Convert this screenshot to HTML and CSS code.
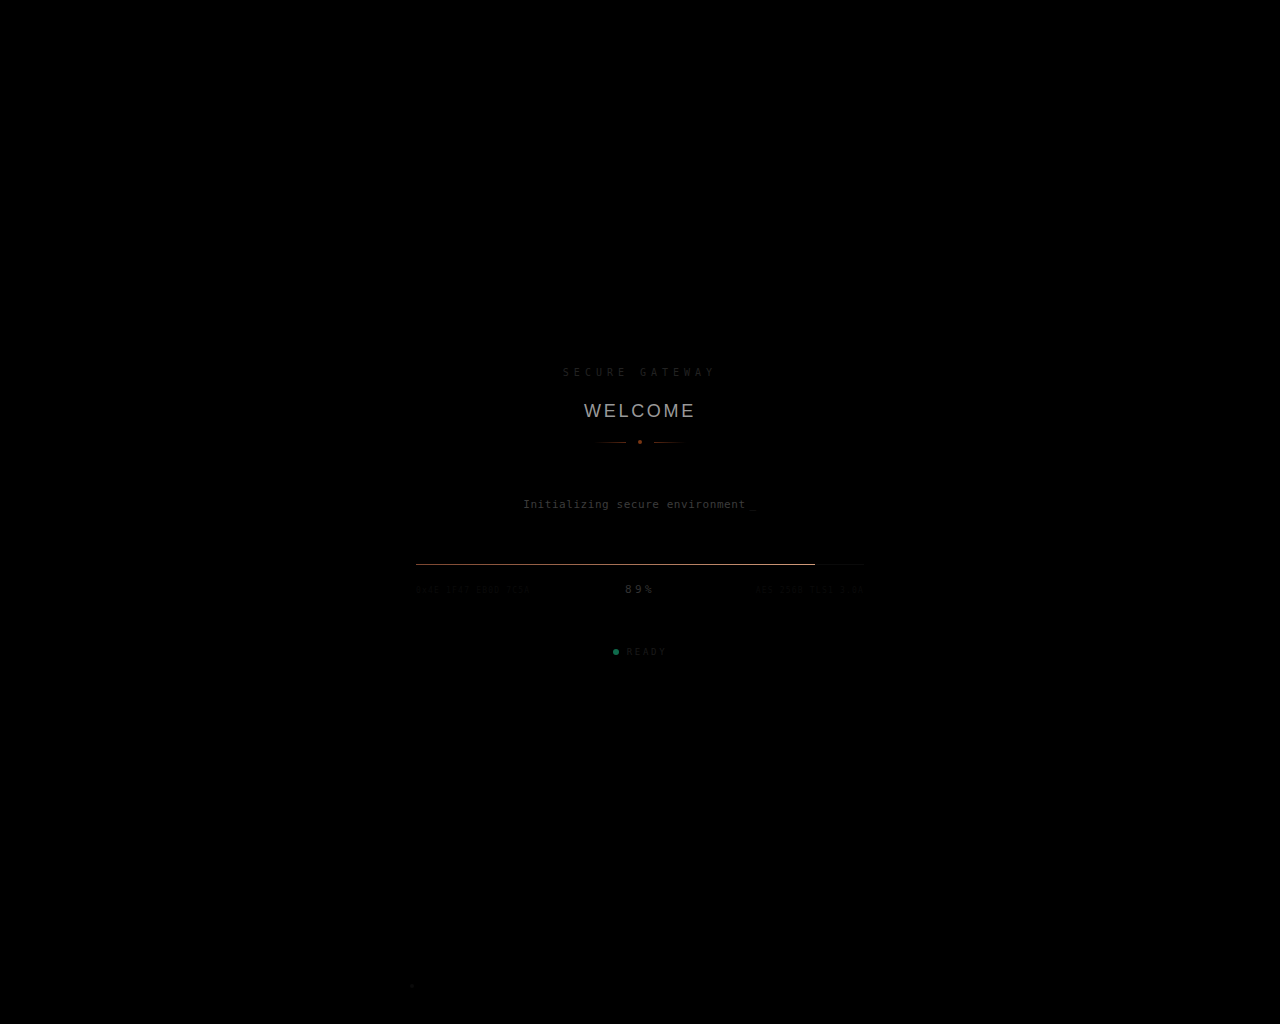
FILE: index.html
```html
<!DOCTYPE html>
<html lang="en">
<head>
    <meta charset="UTF-8">
    <meta name="viewport" content="width=device-width, initial-scale=1.0">
    <title>Welcome</title>
    <link rel="stylesheet" href="styles.css">
</head>
<body>

    <span class="particle"></span>

    <main class="loader">
        <div class="eyebrow">SECURE GATEWAY</div>
        <h1>WELCOME</h1>

        <div class="divider">
            <span class="line line-left"></span>
            <span class="dot"></span>
            <span class="line line-right"></span>
        </div>

        <p class="message">Initializing secure environment<span class="cursor">_</span></p>

        <div class="progress">
            <div class="track">
                <div class="fill" style="width: 89%"></div>
            </div>
            <div class="progress-info">
                <span class="code">0x4E 1F47 EB0D 7C5A</span>
                <span class="percent">89%</span>
                <span class="code code-right">AES 256B TLS1 3.0A</span>
            </div>
        </div>

        <div class="status">
            <span class="status-dot"></span>
            <span>READY</span>
        </div>
    </main>

</body>
</html>
```
FILE: styles.css
```css
* {
    box-sizing: border-box;
}

body {
    margin: 0;
    min-height: 100vh;
    background-color: #000;
    color: #333;
    font-family: "DejaVu Sans Mono", monospace;
    display: flex;
    align-items: center;
    justify-content: center;
}

.loader {
    width: 100%;
    max-width: 448px;
    display: flex;
    flex-direction: column;
    align-items: center;
}

.eyebrow {
    color: #222;
    font-size: 10px;
    line-height: 18px;
    letter-spacing: 0.5em;
}

h1 {
    margin: 15px 0;
    color: #999;
    font-family: "Liberation Sans", Arial, sans-serif;
    font-size: 18px;
    font-weight: 400;
    line-height: 28px;
    letter-spacing: 0.15em;
}

.divider {
    display: flex;
    align-items: center;
    gap: 12px;
}

.line {
    width: 32px;
    height: 1px;
}

.line-left {
    background: linear-gradient(to right, transparent, #5c2812);
}

.line-right {
    background: linear-gradient(to left, transparent, #5c2812);
}

.dot {
    width: 4px;
    height: 4px;
    border-radius: 50%;
    background-color: #7a3612;
}

.message {
    margin: 52px 0 50px;
    color: #3c3c3c;
    font-size: 11px;
    line-height: 18px;
    letter-spacing: 0.05em;
}

.cursor {
    margin-left: 4px;
    color: #222;
}

.progress {
    width: 100%;
}

.track {
    height: 1px;
    background-color: #0a0a0a;
}

.fill {
    height: 100%;
    background: linear-gradient(to right, #7c4630, #d09a7a);
}

.progress-info {
    margin-top: 16px;
    display: grid;
    grid-template-columns: 1fr auto 1fr;
    align-items: center;
}

.code {
    color: #0a0a0a;
    font-size: 8px;
    letter-spacing: 0.15em;
}

.code-right {
    text-align: right;
}

.percent {
    color: #333;
    font-size: 11px;
    line-height: 18px;
    letter-spacing: 0.3em;
}

.status {
    margin-top: 45px;
    display: flex;
    align-items: center;
    gap: 8px;
    color: #1a1a1a;
    font-size: 9px;
    line-height: 16px;
    letter-spacing: 0.3em;
}

.status-dot {
    width: 6px;
    height: 6px;
    border-radius: 50%;
    background-color: #0f6b4c;
}

.particle {
    position: absolute;
    left: 32%;
    bottom: 36px;
    width: 4px;
    height: 4px;
    border-radius: 50%;
    background-color: #0a0a0a;
}
```
